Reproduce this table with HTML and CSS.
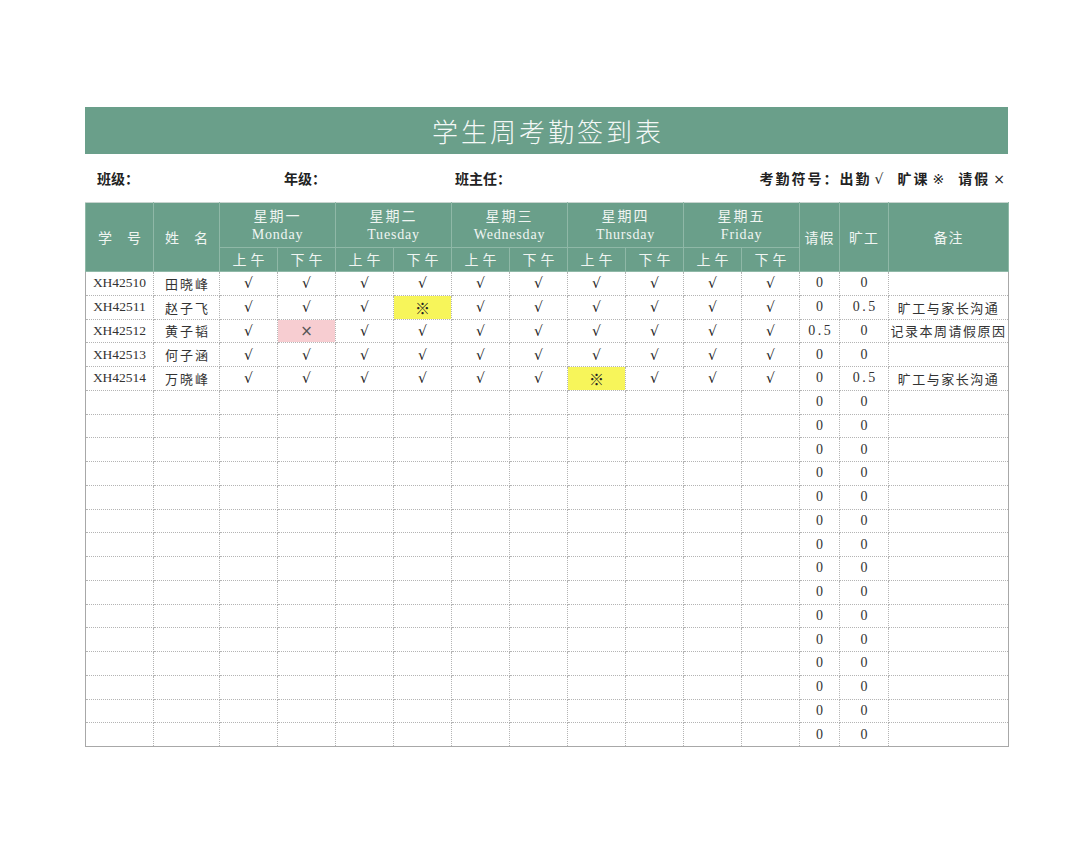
FILE: index.html
```html
<!DOCTYPE html>
<html lang="zh">
<head>
<meta charset="utf-8">
<link rel="stylesheet" href="styles.css">
</head>
<body>
<div class="sheet">
  <div class="title">学生周考勤签到表</div>
  <div class="info">
    <span class="f-class">班级：</span>
    <span class="f-grade">年级：</span>
    <span class="f-teacher">班主任：</span>
    <span class="legend">考勤符号：出勤<span class="sym">√</span><span class="gap"></span>旷课<span class="sym">※</span><span class="gap"></span>请假<span class="sym">×</span></span>
  </div>
  <table class="grid">
    <colgroup>
      <col class="c-id"><col class="c-name">
      <col class="c-half"><col class="c-half"><col class="c-half"><col class="c-half"><col class="c-half">
      <col class="c-half"><col class="c-half"><col class="c-half"><col class="c-half"><col class="c-half">
      <col class="c-leave"><col class="c-abs"><col class="c-note">
    </colgroup>
    <thead>
      <tr class="h1">
        <th rowspan="2" class="sp">学 号</th>
        <th rowspan="2" class="sp">姓 名</th>
        <th colspan="2"><div class="day">星期一</div><div class="en">Monday</div></th>
        <th colspan="2"><div class="day">星期二</div><div class="en">Tuesday</div></th>
        <th colspan="2"><div class="day">星期三</div><div class="en">Wednesday</div></th>
        <th colspan="2"><div class="day">星期四</div><div class="en">Thursday</div></th>
        <th colspan="2"><div class="day">星期五</div><div class="en">Friday</div></th>
        <th rowspan="2">请假</th>
        <th rowspan="2">旷工</th>
        <th rowspan="2">备注</th>
      </tr>
      <tr class="h2">
        <th>上午</th><th>下午</th><th>上午</th><th>下午</th><th>上午</th><th>下午</th><th>上午</th><th>下午</th><th>上午</th><th>下午</th>
      </tr>
    </thead>
    <tbody>
      <tr><td class="id">XH42510</td><td class="nm">田晓峰</td><td>√</td><td>√</td><td>√</td><td>√</td><td>√</td><td>√</td><td>√</td><td>√</td><td>√</td><td>√</td><td class="num">0</td><td class="num">0</td><td class="note"></td></tr>
      <tr><td class="id">XH42511</td><td class="nm">赵子飞</td><td>√</td><td>√</td><td>√</td><td class="absent">※</td><td>√</td><td>√</td><td>√</td><td>√</td><td>√</td><td>√</td><td class="num">0</td><td class="num">0.5</td><td class="note">旷工与家长沟通</td></tr>
      <tr><td class="id">XH42512</td><td class="nm">黄子韬</td><td>√</td><td class="leave">×</td><td>√</td><td>√</td><td>√</td><td>√</td><td>√</td><td>√</td><td>√</td><td>√</td><td class="num">0.5</td><td class="num">0</td><td class="note">记录本周请假原因</td></tr>
      <tr><td class="id">XH42513</td><td class="nm">何子涵</td><td>√</td><td>√</td><td>√</td><td>√</td><td>√</td><td>√</td><td>√</td><td>√</td><td>√</td><td>√</td><td class="num">0</td><td class="num">0</td><td class="note"></td></tr>
      <tr><td class="id">XH42514</td><td class="nm">万晓峰</td><td>√</td><td>√</td><td>√</td><td>√</td><td>√</td><td>√</td><td class="absent">※</td><td>√</td><td>√</td><td>√</td><td class="num">0</td><td class="num">0.5</td><td class="note">旷工与家长沟通</td></tr>
      <tr><td></td><td></td><td></td><td></td><td></td><td></td><td></td><td></td><td></td><td></td><td></td><td></td><td class="num">0</td><td class="num">0</td><td></td></tr>
      <tr><td></td><td></td><td></td><td></td><td></td><td></td><td></td><td></td><td></td><td></td><td></td><td></td><td class="num">0</td><td class="num">0</td><td></td></tr>
      <tr><td></td><td></td><td></td><td></td><td></td><td></td><td></td><td></td><td></td><td></td><td></td><td></td><td class="num">0</td><td class="num">0</td><td></td></tr>
      <tr><td></td><td></td><td></td><td></td><td></td><td></td><td></td><td></td><td></td><td></td><td></td><td></td><td class="num">0</td><td class="num">0</td><td></td></tr>
      <tr><td></td><td></td><td></td><td></td><td></td><td></td><td></td><td></td><td></td><td></td><td></td><td></td><td class="num">0</td><td class="num">0</td><td></td></tr>
      <tr><td></td><td></td><td></td><td></td><td></td><td></td><td></td><td></td><td></td><td></td><td></td><td></td><td class="num">0</td><td class="num">0</td><td></td></tr>
      <tr><td></td><td></td><td></td><td></td><td></td><td></td><td></td><td></td><td></td><td></td><td></td><td></td><td class="num">0</td><td class="num">0</td><td></td></tr>
      <tr><td></td><td></td><td></td><td></td><td></td><td></td><td></td><td></td><td></td><td></td><td></td><td></td><td class="num">0</td><td class="num">0</td><td></td></tr>
      <tr><td></td><td></td><td></td><td></td><td></td><td></td><td></td><td></td><td></td><td></td><td></td><td></td><td class="num">0</td><td class="num">0</td><td></td></tr>
      <tr><td></td><td></td><td></td><td></td><td></td><td></td><td></td><td></td><td></td><td></td><td></td><td></td><td class="num">0</td><td class="num">0</td><td></td></tr>
      <tr><td></td><td></td><td></td><td></td><td></td><td></td><td></td><td></td><td></td><td></td><td></td><td></td><td class="num">0</td><td class="num">0</td><td></td></tr>
      <tr><td></td><td></td><td></td><td></td><td></td><td></td><td></td><td></td><td></td><td></td><td></td><td></td><td class="num">0</td><td class="num">0</td><td></td></tr>
      <tr><td></td><td></td><td></td><td></td><td></td><td></td><td></td><td></td><td></td><td></td><td></td><td></td><td class="num">0</td><td class="num">0</td><td></td></tr>
      <tr><td></td><td></td><td></td><td></td><td></td><td></td><td></td><td></td><td></td><td></td><td></td><td></td><td class="num">0</td><td class="num">0</td><td></td></tr>
      <tr><td></td><td></td><td></td><td></td><td></td><td></td><td></td><td></td><td></td><td></td><td></td><td></td><td class="num">0</td><td class="num">0</td><td></td></tr>
    </tbody>
  </table>
</div>
</body>
</html>
```
FILE: styles.css
```css
html, body {
  margin: 0;
  padding: 0;
  background: #ffffff;
}
body {
  font-family: "Liberation Serif", "Noto Sans CJK SC", serif;
  color: #222;
}
.sheet {
  width: 923px;
  margin-left: 85px;
  padding-top: 107px;
}
.title {
  height: 47px;
  background: #6a9f8a;
  color: #f4f8f6;
  font-family: "Noto Sans CJK SC", sans-serif;
  font-weight: 300;
  font-size: 26px;
  letter-spacing: 3px;
  line-height: 47px;
  text-align: center;
  text-indent: 3px;
}
.info {
  display: flex;
  align-items: center;
  height: 48px;
  font-family: "Noto Sans CJK SC", sans-serif;
  font-weight: 700;
  font-size: 14px;
  color: #222;
}
.f-class { width: 187px; padding-left: 12px; }
.f-grade { width: 171px; }
.f-teacher { flex: 1; }
.legend { padding-right: 3px; letter-spacing: 2px; }
.legend .sym {
  font-family: "DejaVu Sans", sans-serif;
  font-weight: 400;
  font-size: 14px;
  letter-spacing: 0;
  padding-left: 3px;
}
.legend .gap { display: inline-block; width: 14px; }
.grid {
  border-collapse: collapse;
  table-layout: fixed;
  width: 923px;
  border-bottom: 1px solid #a8a8a8;
  border-left: 1px solid #a8a8a8;
  border-right: 1px solid #a8a8a8;
}
.c-id { width: 68px; }
.c-name { width: 66px; }
.c-half { width: 58px; }
.c-leave { width: 40px; }
.c-abs { width: 49px; }
.c-note { width: 120px; }
.grid th {
  background: #6a9f8a;
  color: #f0f5f2;
  font-family: "Noto Sans CJK SC", sans-serif;
  font-weight: 400;
  font-size: 14px;
  border: 1px solid #8fb8a7;
  padding: 0;
  line-height: 1.15;
  letter-spacing: 1px;
}
.grid thead tr.h1 th { border-top: 1px solid #c8d4cf; }
.grid tr.h1 { height: 45px; }
.grid tr.h2 { height: 24px; }
.grid th.sp { letter-spacing: 6px; text-indent: 6px; }
.grid .day { font-size: 14px; letter-spacing: 2px; line-height: 19px; }
.grid .en {
  font-family: "Liberation Serif", serif;
  font-size: 14px;
  line-height: 19px;
  letter-spacing: 0.8px;
}
.grid tr.h2 th { letter-spacing: 4px; text-indent: 4px; }
.grid tbody tr { height: 23.75px; }
.grid td {
  border: 1px dotted #b4b4b4;
  padding: 0;
  text-align: center;
  font-size: 14px;
  color: #222;
  white-space: nowrap;
  overflow: hidden;
  font-family: "DejaVu Sans", "Noto Sans CJK SC", sans-serif;
}
.grid td.id { font-family: "Liberation Serif", serif; font-size: 13.5px; letter-spacing: 0; color: #333; }
.grid td.nm {
  font-family: "Noto Sans CJK SC", sans-serif;
  font-size: 13px;
  letter-spacing: 2px;
  text-indent: 2px;
  color: #333;
}
.grid td.num {
  font-family: "Liberation Serif", serif;
  font-size: 14px;
  letter-spacing: 2.5px;
  text-indent: 2.5px;
  color: #333;
}
.grid td.note {
  font-family: "Noto Sans CJK SC", sans-serif;
  font-size: 13px;
  letter-spacing: 1.5px;
  color: #333;
}
.grid td.absent { background: #f7f55a; font-family: "Noto Sans CJK SC", sans-serif; font-size: 15px; }
.grid td.leave { background: #f7cdd1; color: #555; font-size: 15px; }
```
